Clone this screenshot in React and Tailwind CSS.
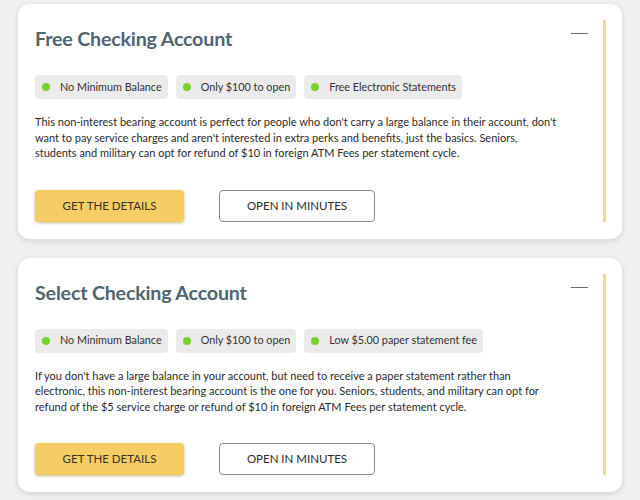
const accounts = [
  {
    title: "Free Checking Account",
    perks: ["No Minimum Balance", "Only $100 to open", "Free Electronic Statements"],
    text: "This non-interest bearing account is perfect for people who don't carry a large balance in their account, don't want to pay service charges and aren't interested in extra perks and benefits, just the basics. Seniors, students and military can opt for refund of $10 in foreign ATM Fees per statement cycle.",
  },
  {
    title: "Select Checking Account",
    perks: ["No Minimum Balance", "Only $100 to open", "Low $5.00 paper statement fee"],
    text: "If you don't have a large balance in your account, but need to receive a paper statement rather than electronic, this non-interest bearing account is the one for you. Seniors, students, and military can opt for refund of the $5 service charge or refund of $10 in foreign ATM Fees per statement cycle.",
  },
];

const AccountCard = ({ account }) => {
  return (
    <div className="bg-white rounded-xl shadow-[0_2px_6px_rgba(0,0,0,0.12)] pl-[17px] pr-4 pt-4 pb-[17px]">
      <div className="flex border-r-[3px] border-[#efd98a]">
        <div className="flex-1">
          <h2 className="pt-[5px] text-[19.7px] leading-[28px] font-bold tracking-[-0.2px] text-[#50656f]">
            {account.title}
          </h2>
          <div className="flex gap-2 mt-[22px]">
            {account.perks.map((perk) => (
              <span
                key={perk}
                className="flex items-center h-6 pl-[7px] pr-[6px] rounded bg-[#ebebeb] text-[10.8px] text-[#333]"
              >
                <span className="w-2 h-2 rounded-full bg-[#78d12e] mr-[10px]" />
                {perk}
              </span>
            ))}
          </div>
          <p className="mt-[15px] max-w-[525px] text-[11px] leading-[15.5px] text-[#2b2b2b]">
            {account.text}
          </p>
          <div className="flex gap-[35px] mt-[29px]">
            <button className="w-[149px] h-8 rounded bg-[#f5cd64] shadow-[0_1px_3px_rgba(120,90,0,0.45)] text-[11.5px] text-[#3a3320] uppercase">
              Get the Details
            </button>
            <button className="w-[156px] h-8 rounded border border-[#8a8a8a] bg-white text-[11.5px] text-[#2b2b2b] uppercase">
              Open in Minutes
            </button>
          </div>
        </div>
        <div className="pr-[15px] pt-[13px]">
          <div className="w-[17px] h-px bg-[#6b6b6b]" />
        </div>
      </div>
    </div>
  );
};

const App = () => {
  return (
    <div
      className="min-h-screen bg-[#eef0f2] px-[18px] pt-1 flex flex-col gap-[19px]"
      style={{ fontFamily: "Lato, 'Liberation Sans', sans-serif" }}
    >
      {accounts.map((account) => (
        <AccountCard key={account.title} account={account} />
      ))}
    </div>
  );
};

export default App;
